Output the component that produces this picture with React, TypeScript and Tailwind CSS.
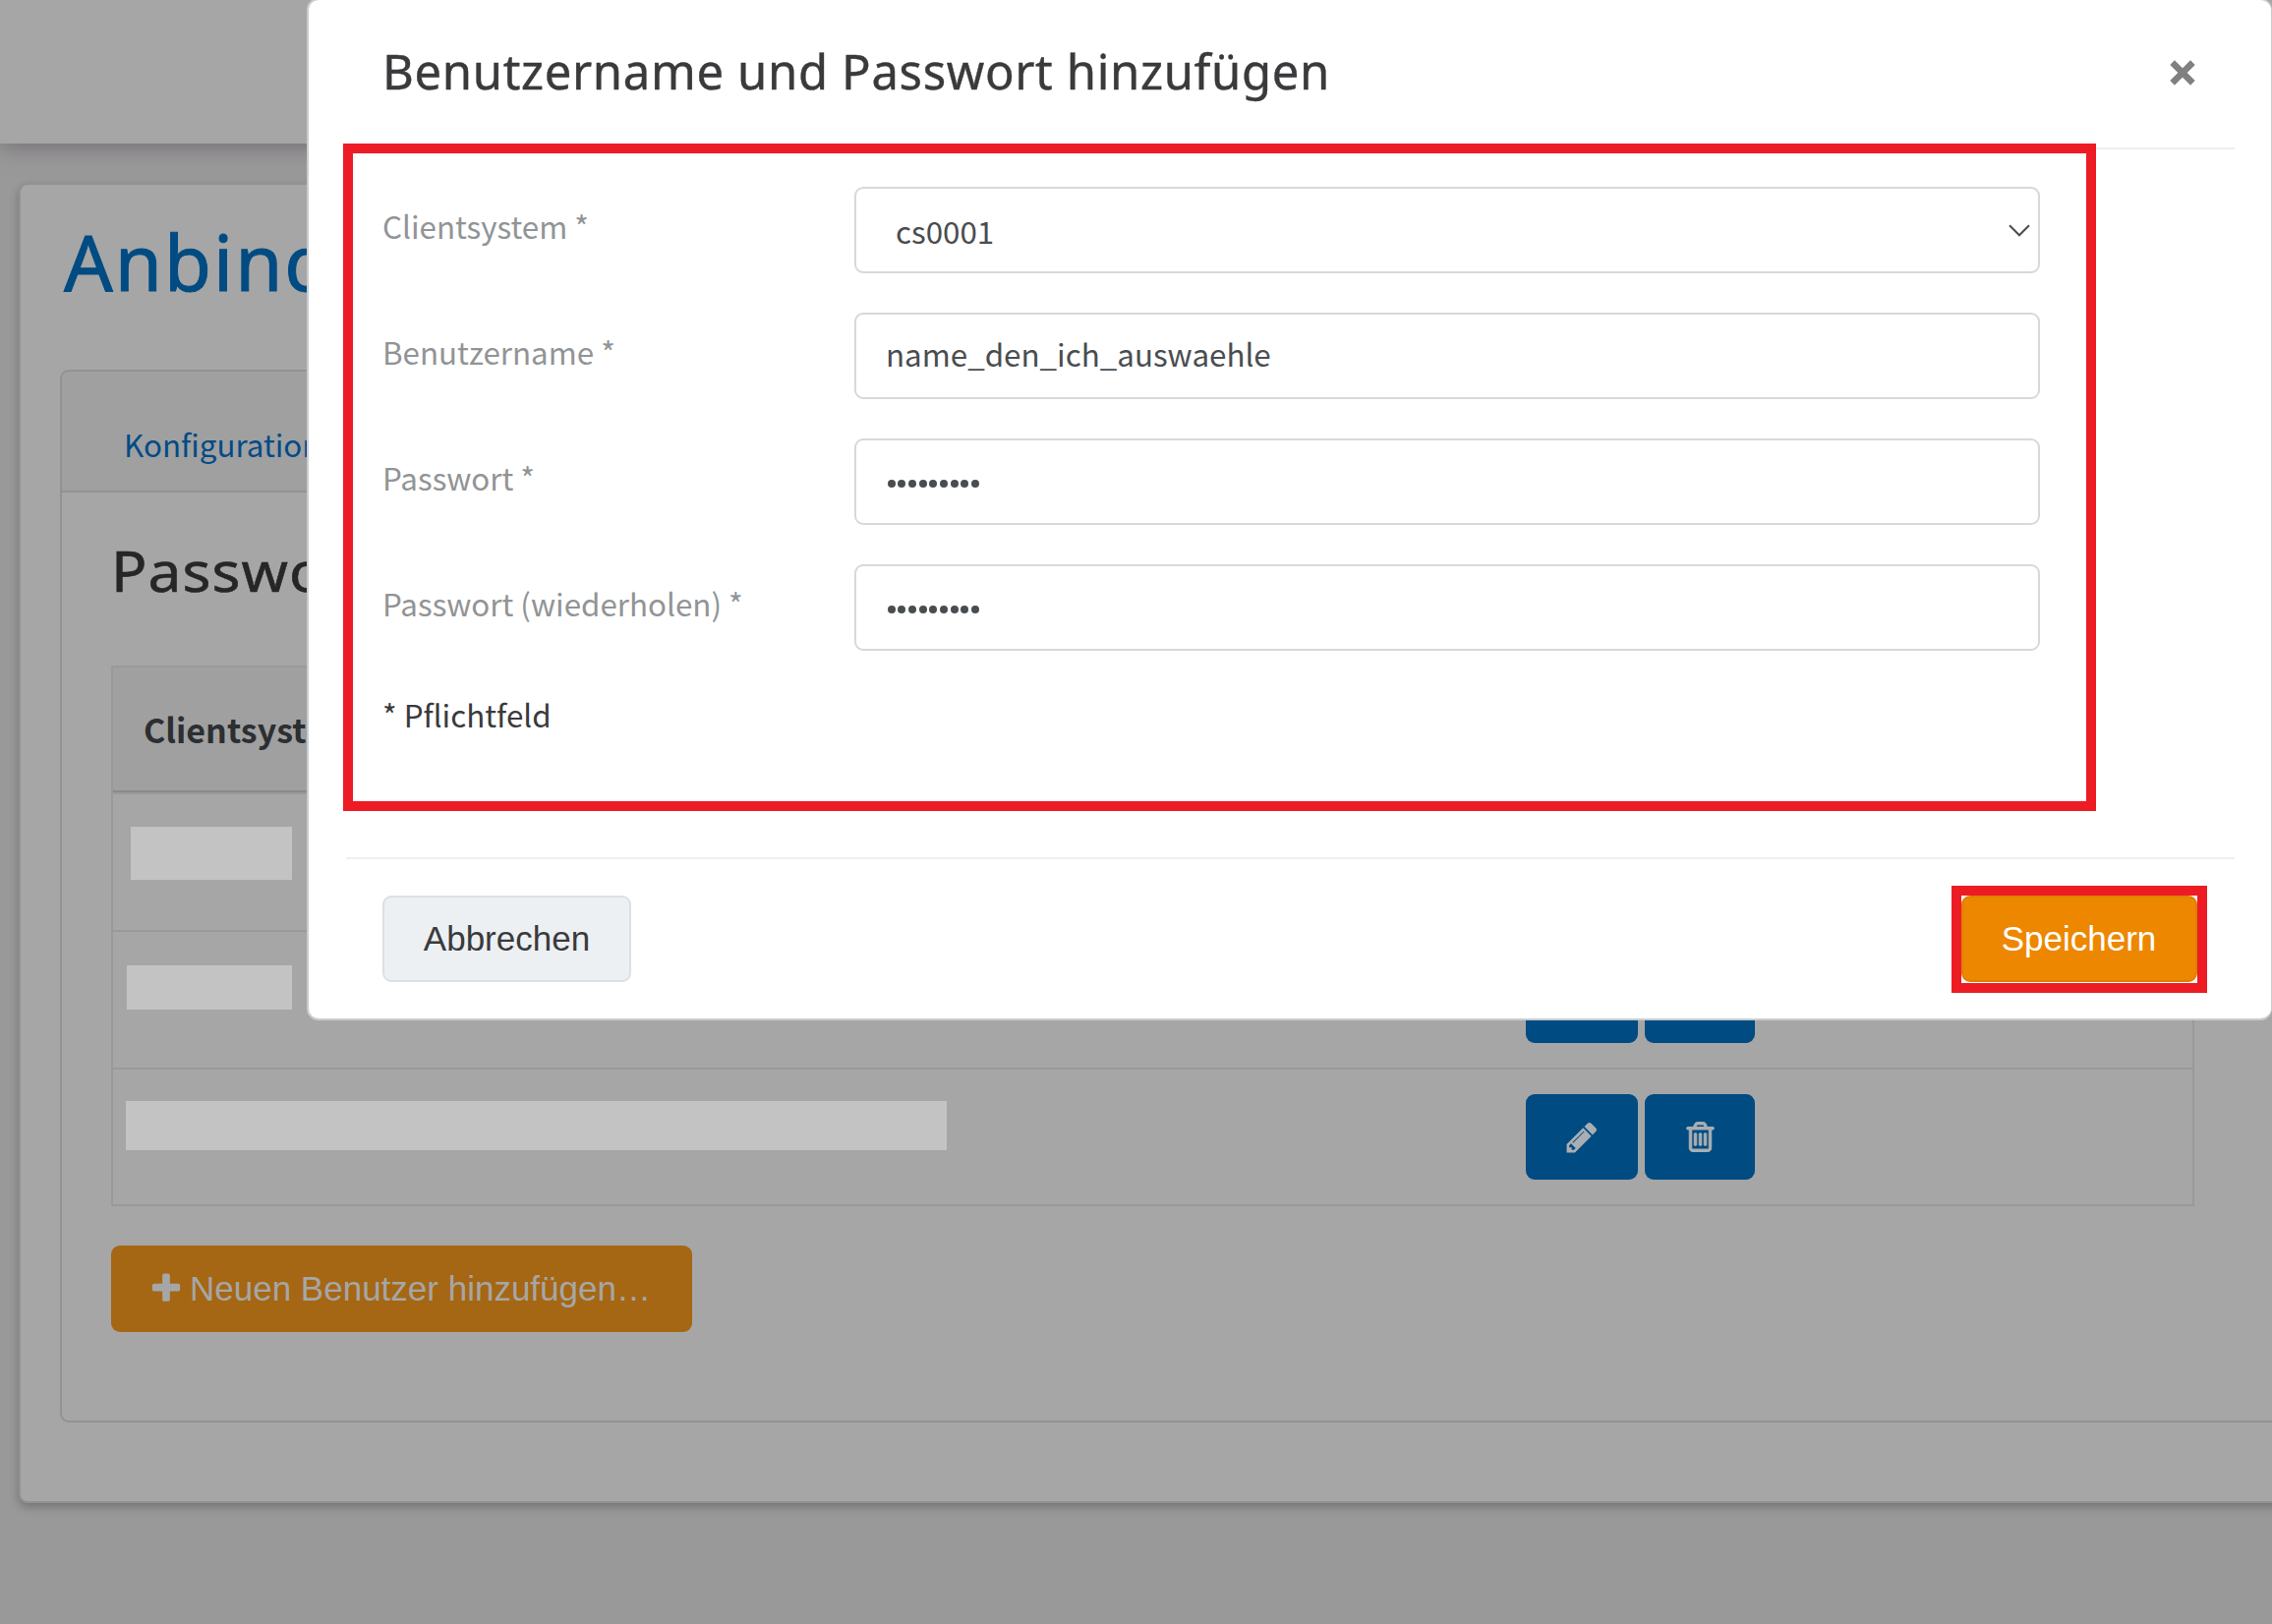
import React from "react";

const SOURCE = "font-['Noto_Sans_CJK_SC','Noto_Sans',sans-serif]";
const ROUND = "font-['Noto_Sans',sans-serif]";
const ARIAL = "font-['Liberation_Sans',Arial,sans-serif]";

function Icon({ d, className }: { d: string; className: string }) {
  return (
    <svg viewBox="0 0 1792 1792" fill="currentColor" className={className} aria-hidden="true">
      <path d={d} />
    </svg>
  );
}

const PENCIL =
  "M491 1536l91-91-235-235-91 91v107h128v128h107zm523-928q0-22-22-22-10 0-17 7l-542 542q-7 7-7 17 0 22 22 22 10 0 17-7l542-542q7-7 7-17zm-54-192l416 416-832 832h-416v-416zm683 96q0 53-37 90l-166 166-416-416 166-165q36-38 90-38 53 0 91 38l235 234q37 39 37 91z";
const TRASH =
  "M704 736v576q0 14-9 23t-23 9h-64q-14 0-23-9t-9-23v-576q0-14 9-23t23-9h64q14 0 23 9t9 23zm256 0v576q0 14-9 23t-23 9h-64q-14 0-23-9t-9-23v-576q0-14 9-23t23-9h64q14 0 23 9t9 23zm256 0v576q0 14-9 23t-23 9h-64q-14 0-23-9t-9-23v-576q0-14 9-23t23-9h64q14 0 23 9t9 23zm128 724v-948h-896v948q0 22 7 40.5t14.5 27 10.5 8.5h832q3 0 10.5-8.5t14.5-27 7-40.5zm-672-1076h448l-48-117q-7-9-17-11h-317q-10 2-17 11zm928 32v64q0 14-9 23t-23 9h-96v948q0 83-47 143.5t-113 60.5h-832q-66 0-113-58.5t-47-141.5v-952h-96q-14 0-23-9t-9-23v-64q0-14 9-23t23-9h309l70-167q15-37 54-63t79-26h320q40 0 79 26t54 63l70 167h309q14 0 23 9t9 23z";
const PLUS =
  "M1600 736v192q0 40-28 68t-68 28h-416v416q0 40-28 68t-68 28h-192q-40 0-68-28t-28-68v-416h-416q-40 0-68-28t-28-68v-192q0-40 28-68t68-28h416v-416q0-40 28-68t68-28h192q40 0 68 28t28 68v416h416q40 0 68 28t28 68z";

function RowActions() {
  return (
    <div className="flex gap-[7px] text-[#a9aeb3]">
      <button className="flex h-[87px] w-[114px] items-center justify-center rounded-[9px] bg-[#004b82]">
        <Icon d={PENCIL} className="size-[36px]" />
      </button>
      <button className="flex h-[87px] w-[112px] items-center justify-center rounded-[9px] bg-[#004b82]">
        <Icon d={TRASH} className="size-[35px] stroke-current stroke-[50]" />
      </button>
    </div>
  );
}

function TableRow({ row, mask }: { row: string; mask: string }) {
  return (
    <div className={`flex items-start justify-between border-b-2 border-[#999] pr-[445px] ${row}`}>
      <div className={`bg-[#c3c3c3] ${mask}`} />
      <RowActions />
    </div>
  );
}

function Page() {
  return (
    <div className="flex h-full w-full flex-col bg-[#999]">
      <header className="h-[146px] shrink-0 bg-[#a6a6a6] shadow-[0_2px_22px_rgba(90,80,90,0.65)]" />
      <main className="mt-[40px] ml-[19px] h-[1343px] w-[2400px] shrink-0 rounded-[9px] border-2 border-[#929292] bg-[#a6a6a6] pl-[40px] shadow-[0_4px_10px_rgba(0,0,0,0.25)]">
        <h1 className={`mt-[33px] h-[92px] pl-[4px] text-[78px] leading-[91px] tracking-[2px] text-[#004b82] [-webkit-text-stroke:1px_#004b82] ${ROUND}`}>
          Anbindung
        </h1>
        <section className="mt-[63px] h-[1071px] rounded-[9px] border-2 border-[#929292]">
          <nav className={`flex h-[123px] items-end rounded-t-[8px] border-b-2 border-[#929292] bg-[#a0a0a0] pl-[63px] text-[31.3px] text-[#004b87] ${SOURCE}`}>
            <a className="mb-[24px] leading-[46px]">Konfiguration</a>
          </nav>
          <h2 className={`mt-[43px] ml-[50px] h-[75px] w-[300px] origin-left scale-x-[1.06] text-[57px] leading-[72px] tracking-[1px] text-[#262626] [-webkit-text-stroke:0.6px_#262626] ${ROUND}`}>
            Passwort
          </h2>
          <div className="mt-[58px] ml-[50px] w-[2119px] border-2 border-b-0 border-[#999]">
            <div className={`flex h-[127px] items-center border-b-2 border-[#8a8a8a] bg-[#a0a0a0] pl-[31px] text-[34px] leading-[50px] font-bold text-[#2c2f32] ${SOURCE}`}>
              Clientsystem
            </div>
            <div className="h-[2px] bg-[#989a9c]" />
            <TableRow row="h-[140px] pt-[26px]" mask="ml-[18px] mt-[7px] h-[54px] w-[164px]" />
            <TableRow row="h-[140px] pt-[26px]" mask="ml-[14px] mt-[8px] h-[45px] w-[168px]" />
            <TableRow row="h-[139px] pt-[25px]" mask="ml-[13px] mt-[7px] h-[50px] w-[835px]" />
          </div>
          <button className={`mt-[40px] ml-[50px] flex h-[88px] w-[591px] items-center rounded-[9px] bg-[#a56713] pl-[38px] text-[35px] text-[#a6a6a6] ${ARIAL}`}>
            <Icon d={PLUS} className="size-[36px]" />
            <span className="ml-[6px] whitespace-nowrap">Neuen Benutzer hinzufügen…</span>
          </button>
        </section>
      </main>
    </div>
  );
}

function Field({ label, children }: { label: string; children: React.ReactNode }) {
  return (
    <div className={`flex h-[88px] text-[31.35px] ${SOURCE}`}>
      <label className="w-[480px] pt-[17px] leading-[46px] whitespace-nowrap text-[#919496]">{label}</label>
      <div className="flex h-[88px] w-[1206px] rounded-[9px] border-2 border-[#d8d8d8] bg-white text-[#4a4d50]">
        {children}
      </div>
    </div>
  );
}

function Dots() {
  return (
    <div className="flex items-center gap-[2.7px] pt-[3px] pl-[31.5px]">
      {Array.from({ length: 9 }, (_, i) => (
        <span key={i} className="size-[8px] rounded-full bg-[#4a4d50]" />
      ))}
    </div>
  );
}

function Modal() {
  return (
    <div className="absolute -top-[2px] left-[312px] flex h-[1040px] w-[1999px] flex-col rounded-[12px] border-2 border-r border-[#c8ccd0] bg-white pr-[37px] pl-[38px]">
      <div className="flex h-[152px] shrink-0 items-start justify-between border-b-2 border-[#eee] pr-[40px] pl-[37px]">
        <h2 className={`pt-[37px] text-[49px] leading-[70px] tracking-[0.65px] whitespace-nowrap text-[#3a3a3c] [-webkit-text-stroke:0.4px_#3a3a3c] ${ROUND}`}>
          Benutzername und Passwort hinzufügen
        </h2>
        <svg viewBox="0 0 26 26" className="mt-[61px] size-[26px]" aria-hidden="true">
          <path d="M2.6 2.6L23.4 23.4M23.4 2.6L2.6 23.4" stroke="#808080" strokeWidth="6.6" fill="none" />
        </svg>
      </div>
      <div className="-mt-[6px] -ml-[3px] h-[679px] w-[1783px] shrink-0 border-[10px] border-[#ed1c24] bg-white pt-[34px] pl-[30px]">
        <div className="flex flex-col gap-[40px]">
          <Field label="Clientsystem *">
            <div className="flex flex-1 items-start justify-between pt-[20px] pr-[8px] pl-[40px]">
              <span className="leading-[46px]">cs0001</span>
              <svg viewBox="0 0 22 13" className="mt-[16px] h-[13px] w-[22px]" aria-hidden="true">
                <path d="M1 1.3L11 11.3L21 1.3" stroke="#4a4d50" strokeWidth="2" fill="none" />
              </svg>
            </div>
          </Field>
          <Field label="Benutzername *">
            <span className="pt-[17px] pl-[30px] leading-[46px]">name_den_ich_auswaehle</span>
          </Field>
          <Field label="Passwort *">
            <Dots />
          </Field>
          <Field label="Passwort (wiederholen) *">
            <Dots />
          </Field>
        </div>
        <p className={`mt-[42px] text-[31.35px] leading-[46px] text-[#3a3a3c] ${SOURCE}`}>* Pflichtfeld</p>
      </div>
      <div className={`mt-[47px] flex justify-between border-t-2 border-[#eee] pr-[28px] pl-[37px] text-[35px] ${ARIAL}`}>
        <button className="mt-[37px] h-[88px] w-[253px] rounded-[9px] border-2 border-[#dce0e3] bg-[#ecf0f3] text-[#3a3a3c]">
          Abbrechen
        </button>
        <div className="mt-[27px] h-[109px] w-[260px] border-[10px] border-[#ed1c24]">
          <button className="h-[88px] w-[240px] rounded-[9px] border-2 border-[#e08000] bg-[#ed8700] pr-px text-white">
            Speichern
          </button>
        </div>
      </div>
    </div>
  );
}

export default function App() {
  return (
    <div className="relative h-[1652px] w-[2311px] overflow-hidden">
      <Page />
      <Modal />
    </div>
  );
}
